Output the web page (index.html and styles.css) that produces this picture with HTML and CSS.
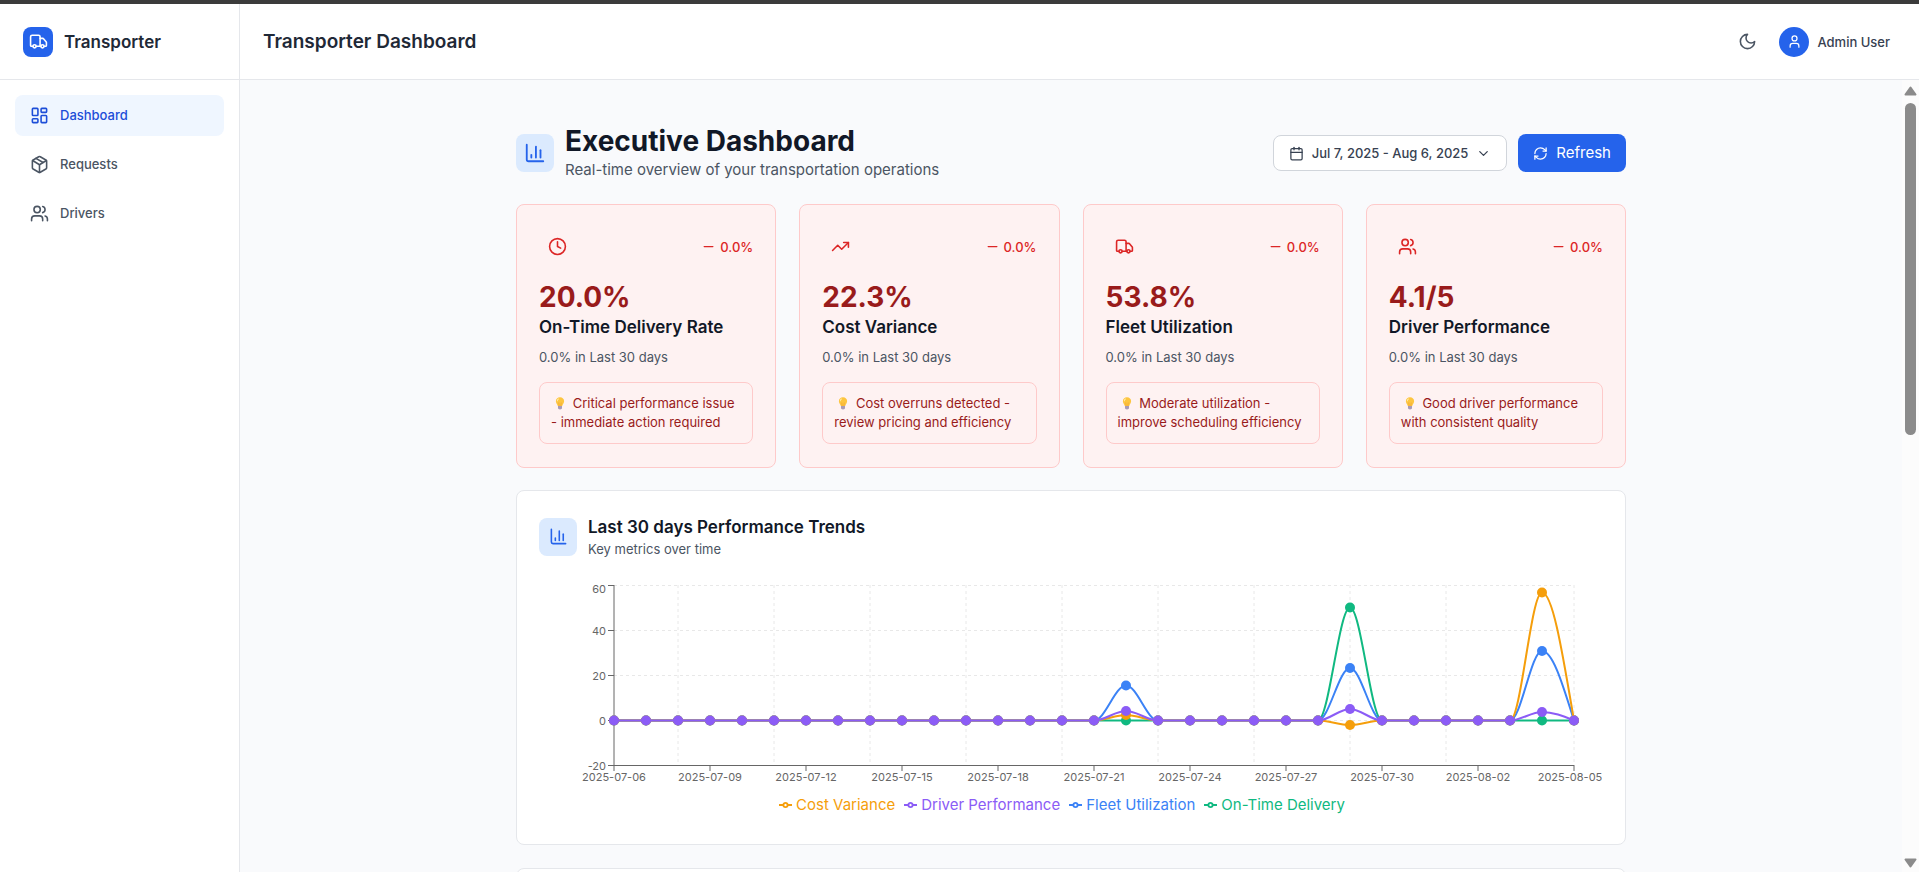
FILE: index.html
```html
<!DOCTYPE html>
<html lang="en">
<head>
<meta charset="utf-8">
<meta name="viewport" content="width=device-width, initial-scale=1">
<title>Transporter Dashboard</title>
<link rel="stylesheet" href="styles.css">
</head>
<body>
<svg class="sprite" aria-hidden="true">
  <symbol id="i-truck" viewBox="0 0 24 24"><path d="M14 18V6a2 2 0 0 0-2-2H4a2 2 0 0 0-2 2v11a1 1 0 0 0 1 1h2"/><path d="M15 18H9"/><path d="M19 18h2a1 1 0 0 0 1-1v-3.65a1 1 0 0 0-.22-.624l-3.48-4.35A1 1 0 0 0 17.52 8H14"/><circle cx="17" cy="18" r="2"/><circle cx="7" cy="18" r="2"/></symbol>
  <symbol id="i-grid" viewBox="0 0 24 24"><rect x="3" y="3" width="7" height="9" rx="1"/><rect x="14" y="3" width="7" height="5" rx="1"/><rect x="14" y="12" width="7" height="9" rx="1"/><rect x="3" y="16" width="7" height="5" rx="1"/></symbol>
  <symbol id="i-package" viewBox="0 0 24 24"><path d="M11 21.73a2 2 0 0 0 2 0l7-4A2 2 0 0 0 21 16V8a2 2 0 0 0-1-1.73l-7-4a2 2 0 0 0-2 0l-7 4A2 2 0 0 0 3 8v8a2 2 0 0 0 1 1.73z"/><path d="M12 22V12"/><path d="m3.3 7 7.703 4.734a2 2 0 0 0 1.994 0L20.7 7"/><path d="m7.5 4.27 9 5.15"/></symbol>
  <symbol id="i-users" viewBox="0 0 24 24"><path d="M16 21v-2a4 4 0 0 0-4-4H6a4 4 0 0 0-4 4v2"/><circle cx="9" cy="7" r="4"/><path d="M22 21v-2a4 4 0 0 0-3-3.87"/><path d="M16 3.13a4 4 0 0 1 0 7.75"/></symbol>
  <symbol id="i-user" viewBox="0 0 24 24"><path d="M19 21v-2a4 4 0 0 0-4-4H9a4 4 0 0 0-4 4v2"/><circle cx="12" cy="7" r="4"/></symbol>
  <symbol id="i-moon" viewBox="0 0 24 24"><path d="M12 3a6 6 0 0 0 9 9 9 9 0 1 1-9-9Z"/></symbol>
  <symbol id="i-chart" viewBox="0 0 24 24"><path d="M3 3v16a2 2 0 0 0 2 2h16"/><path d="M18 17V9"/><path d="M13 17V5"/><path d="M8 17v-3"/></symbol>
  <symbol id="i-calendar" viewBox="0 0 24 24"><path d="M8 2v4"/><path d="M16 2v4"/><rect x="3" y="4" width="18" height="18" rx="2"/><path d="M3 10h18"/></symbol>
  <symbol id="i-chevron" viewBox="0 0 24 24"><path d="m6 9 6 6 6-6"/></symbol>
  <symbol id="i-refresh" viewBox="0 0 24 24"><path d="M3 12a9 9 0 0 1 9-9 9.75 9.75 0 0 1 6.74 2.74L21 8"/><path d="M21 3v5h-5"/><path d="M21 12a9 9 0 0 1-9 9 9.75 9.75 0 0 1-6.74-2.74L3 16"/><path d="M8 16H3v5"/></symbol>
  <symbol id="i-clock" viewBox="0 0 24 24"><circle cx="12" cy="12" r="10"/><path d="M12 6v6l4 2"/></symbol>
  <symbol id="i-trend" viewBox="0 0 24 24"><path d="M16 7h6v6"/><path d="m22 7-8.500 8.500-5-5L2 17"/></symbol>
  <symbol id="i-minus" viewBox="0 0 24 24"><path d="M5 12h14"/></symbol>
  <symbol id="i-bulb" viewBox="0 0 16 16"><path d="M8 1.500c-2.900 0-4.700 2-4.700 4.400 0 2.300 1.700 3.200 2.200 5.600h5c.5-2.400 2.200-3.300 2.200-5.600 0-2.400-1.800-4.400-4.700-4.400z" fill="#fdc53f" stroke="none"/><path d="M6.600 3.200c-1.200.5-1.700 1.500-1.700 2.700" fill="none" stroke="#ffe9a0" stroke-width="1.200"/><path d="M7 11.500 6.600 7.500M9 11.500l.4-4" fill="none" stroke="#f0a030" stroke-width=".7"/><path d="M5.700 11.500h4.600v2.200c0 .8-.8 1.600-2.300 1.600s-2.300-.8-2.300-1.600z" fill="#a99bb5" stroke="none"/></symbol>
  <symbol id="i-series" viewBox="0 0 14 14"><path d="M0 7h4.700a2.300 2.300 0 1 1 4.600 0H14M9.300 7a2.300 2.300 0 1 1-4.600 0"/></symbol>
</svg>

<div class="app">
  <aside class="sidebar">
    <div class="brand">
      <span class="brand-mark"><svg class="icon icon-lg"><use href="#i-truck"/></svg></span>
      <span class="brand-name">Transporter</span>
    </div>
    <nav class="nav">
      <a class="nav-item active" href="#dashboard"><svg class="icon icon-lg"><use href="#i-grid"/></svg>Dashboard</a>
      <a class="nav-item" href="#requests"><svg class="icon icon-lg"><use href="#i-package"/></svg>Requests</a>
      <a class="nav-item" href="#drivers"><svg class="icon icon-lg"><use href="#i-users"/></svg>Drivers</a>
    </nav>
  </aside>

  <div class="content">
    <header class="topbar">
      <div class="topbar-title">Transporter Dashboard</div>
      <div class="topbar-actions">
        <button class="icon-button" type="button" aria-label="Toggle dark mode"><svg class="icon icon-lg"><use href="#i-moon"/></svg></button>
        <button class="user" type="button"><span class="avatar"><svg class="icon icon-sm"><use href="#i-user"/></svg></span>Admin User</button>
      </div>
    </header>

    <div class="viewport">
      <main class="page">
        <div class="page-inner">
          <div class="page-head">
            <div class="heading">
              <span class="badge"><svg class="icon icon-xl"><use href="#i-chart"/></svg></span>
              <div>
                <h1>Executive Dashboard</h1>
                <p class="subtitle">Real-time overview of your transportation operations</p>
              </div>
            </div>
            <div class="actions">
              <button class="date-button" type="button"><svg class="icon icon-sm"><use href="#i-calendar"/></svg>Jul 7, 2025 - Aug 6, 2025<svg class="icon icon-sm"><use href="#i-chevron"/></svg></button>
              <button class="refresh-button" type="button"><svg class="icon icon-sm"><use href="#i-refresh"/></svg>Refresh</button>
            </div>
          </div>

          <section class="kpis">
            <article class="kpi">
              <div class="kpi-top"><span class="kpi-icon"><svg class="icon icon-lg"><use href="#i-clock"/></svg></span><span class="kpi-trend"><svg class="icon icon-sm"><use href="#i-minus"/></svg>0.0%</span></div>
              <div class="kpi-value">20.0%</div>
              <h2>On-Time Delivery Rate</h2>
              <p class="kpi-period">0.0% in Last 30 days</p>
              <p class="kpi-note"><svg class="bulb"><use href="#i-bulb"/></svg> Critical performance issue - immediate action required</p>
            </article>
            <article class="kpi">
              <div class="kpi-top"><span class="kpi-icon"><svg class="icon icon-lg"><use href="#i-trend"/></svg></span><span class="kpi-trend"><svg class="icon icon-sm"><use href="#i-minus"/></svg>0.0%</span></div>
              <div class="kpi-value">22.3%</div>
              <h2>Cost Variance</h2>
              <p class="kpi-period">0.0% in Last 30 days</p>
              <p class="kpi-note"><svg class="bulb"><use href="#i-bulb"/></svg> Cost overruns detected - review pricing and efficiency</p>
            </article>
            <article class="kpi">
              <div class="kpi-top"><span class="kpi-icon"><svg class="icon icon-lg"><use href="#i-truck"/></svg></span><span class="kpi-trend"><svg class="icon icon-sm"><use href="#i-minus"/></svg>0.0%</span></div>
              <div class="kpi-value">53.8%</div>
              <h2>Fleet Utilization</h2>
              <p class="kpi-period">0.0% in Last 30 days</p>
              <p class="kpi-note"><svg class="bulb"><use href="#i-bulb"/></svg> Moderate utilization - improve scheduling efficiency</p>
            </article>
            <article class="kpi">
              <div class="kpi-top"><span class="kpi-icon"><svg class="icon icon-lg"><use href="#i-users"/></svg></span><span class="kpi-trend"><svg class="icon icon-sm"><use href="#i-minus"/></svg>0.0%</span></div>
              <div class="kpi-value">4.1/5</div>
              <h2>Driver Performance</h2>
              <p class="kpi-period">0.0% in Last 30 days</p>
              <p class="kpi-note"><svg class="bulb"><use href="#i-bulb"/></svg> Good driver performance with consistent quality</p>
            </article>
          </section>

          <section class="panel">
            <div class="heading">
              <span class="badge"><svg class="icon icon-lg"><use href="#i-chart"/></svg></span>
              <div>
                <h2>Last 30 days Performance Trends</h2>
                <p class="panel-sub">Key metrics over time</p>
              </div>
            </div>
            <svg class="chart" viewBox="0 0 1064 208" role="img" aria-label="Performance trends from 2025-07-06 to 2025-08-05">
              <defs>
                <marker id="dot-green" markerUnits="userSpaceOnUse" markerWidth="12" markerHeight="12" refX="6" refY="6"><circle cx="6" cy="6" r="5" fill="#10b981"/></marker>
                <marker id="dot-blue" markerUnits="userSpaceOnUse" markerWidth="12" markerHeight="12" refX="6" refY="6"><circle cx="6" cy="6" r="5" fill="#3b82f6"/></marker>
                <marker id="dot-amber" markerUnits="userSpaceOnUse" markerWidth="12" markerHeight="12" refX="6" refY="6"><circle cx="6" cy="6" r="5" fill="#f59e0b"/></marker>
                <marker id="dot-violet" markerUnits="userSpaceOnUse" markerWidth="12" markerHeight="12" refX="6" refY="6"><circle cx="6" cy="6" r="5" fill="#8b5cf6"/></marker>
              </defs>
              <path class="gridlines" d="M75 5.500H1035M75 50.500H1035M75 95.500H1035M75 140.500H1035M139 5V185M235 5V185M331 5V185M427 5V185M523 5V185M619 5V185M715 5V185M811 5V185M907 5V185M1035 5V185"/>
              <path class="axis" d="M75 5V185.500H1035M69 5.500H75M69 50.500H75M69 95.500H75M69 140.500H75M69 185.500H75M75 185v6M171 185v6M267 185v6M363 185v6M459 185v6M555 185v6M651 185v6M747 185v6M843 185v6M939 185v6M1035 185v6"/>
              <g class="ticks ticks-y">
                <text x="67" y="13">60</text><text x="67" y="55">40</text><text x="67" y="100">20</text><text x="67" y="145">0</text><text x="67" y="190">-20</text>
              </g>
              <g class="ticks ticks-x">
                <text x="75" y="201">2025-07-06</text><text x="171" y="201">2025-07-09</text><text x="267" y="201">2025-07-12</text><text x="363" y="201">2025-07-15</text><text x="459" y="201">2025-07-18</text><text x="555" y="201">2025-07-21</text><text x="651" y="201">2025-07-24</text><text x="747" y="201">2025-07-27</text><text x="843" y="201">2025-07-30</text><text x="939" y="201">2025-08-02</text><text x="1031" y="201">2025-08-05</text>
              </g>
              <path class="series green" d="M75 140.500h32h32h32h32h32h32h32h32h32h32h32h32h32h32h32h32h32h32h32h32h32h32C790 140.500 800 27.500 811 27.500C822 27.500 832 140.500 843 140.500h32h32h32h32h32h32"/>
              <path class="series blue" d="M75 140.500h32h32h32h32h32h32h32h32h32h32h32h32h32h32h32C566 140.500 576 105.500 587 105.500C598 105.500 608 140.500 619 140.500h32h32h32h32h32C790 140.500 800 88 811 88C822 88 832 140.500 843 140.500h32h32h32h32C982 140.500 992 71 1003 71C1014 71 1024 105.500 1035 140.500"/>
              <path class="series amber" d="M75 140.500h32h32h32h32h32h32h32h32h32h32h32h32h32h32h32C566 140.500 576 135 587 135C598 135 608 140.500 619 140.500h32h32h32h32h32C790 140.500 800 145 811 145C822 145 832 140.500 843 140.500h32h32h32h32C982 140.500 992 12.500 1003 12.500C1014 12.500 1024 76 1035 140.500"/>
              <path class="series violet" d="M75 140.500h32h32h32h32h32h32h32h32h32h32h32h32h32h32h32C566 140.500 576 131 587 131C598 131 608 140.500 619 140.500h32h32h32h32h32C790 140.500 800 129 811 129C822 129 832 140.500 843 140.500h32h32h32h32C982 140.500 992 132 1003 132C1014 132 1024 136 1035 140.500"/>
            </svg>
            <ul class="legend">
              <li class="amber"><svg class="legend-icon"><use href="#i-series"/></svg>Cost Variance</li>
              <li class="violet"><svg class="legend-icon"><use href="#i-series"/></svg>Driver Performance</li>
              <li class="blue"><svg class="legend-icon"><use href="#i-series"/></svg>Fleet Utilization</li>
              <li class="green"><svg class="legend-icon"><use href="#i-series"/></svg>On-Time Delivery</li>
            </ul>
          </section>

          <section class="panel panel-next"></section>
        </div>
      </main>
      <div class="scrollbar" aria-hidden="true">
        <svg class="arrow" viewBox="0 0 13 10"><path d="M6.500 1.500 11.500 8.500H1.500z"/></svg>
        <span class="track"><span class="thumb"></span></span>
        <svg class="arrow" viewBox="0 0 13 10"><path d="M6.500 8.500 1.500 1.500h10z"/></svg>
      </div>
    </div>
  </div>
</div>
</body>
</html>
```

FILE: styles.css
```css
* { box-sizing: border-box; }

body {
  margin: 0;
  height: 100vh;
  overflow: hidden;
  border-top: 4px solid #3b3b3b;
  background: #f9fafc;
  color: #111827;
  font: 400 15px/22px Inter, "Liberation Sans", sans-serif;
}

h1, h2, p, ul { margin: 0; padding: 0; }
button { font: inherit; cursor: pointer; }

.sprite { position: absolute; width: 0; height: 0; }

.icon {
  flex: none;
  fill: none;
  stroke: currentColor;
  stroke-width: 2;
  stroke-linecap: round;
  stroke-linejoin: round;
}
.icon-sm { width: 15px; height: 15px; }
.icon-lg { width: 19px; height: 19px; }
.icon-xl { width: 22px; height: 22px; }

.app { display: flex; height: 100%; }

.sidebar {
  flex: none;
  width: 240px;
  background: #fff;
  border-right: 1px solid #e5e7eb;
}
.brand {
  display: flex;
  align-items: center;
  gap: 11px;
  height: 76px;
  padding: 0 23px;
  border-bottom: 1px solid #e5e7eb;
}
.brand-mark {
  display: grid;
  place-items: center;
  width: 30px;
  height: 30px;
  border-radius: 8px;
  background: #2563eb;
  color: #fff;
}
.brand-name { font-size: 17px; font-weight: 600; color: #1f2937; }

.nav { display: flex; flex-direction: column; gap: 8px; padding: 15px; }
.nav-item {
  display: flex;
  align-items: center;
  gap: 11px;
  padding: 11px 15px;
  border-radius: 8px;
  color: #4b5563;
  font-size: 13px;
  font-weight: 500;
  line-height: 19px;
  text-decoration: none;
}
.nav-item.active { background: #eff6ff; color: #1d4ed8; }

.content { display: flex; flex: 1; flex-direction: column; min-width: 0; }

.topbar {
  display: flex;
  flex: none;
  align-items: center;
  justify-content: space-between;
  height: 76px;
  padding: 0 29px 0 23px;
  background: #fff;
  border-bottom: 1px solid #e5e7eb;
}
.topbar-title { font-size: 19px; font-weight: 600; line-height: 24px; color: #1f2937; }
.topbar-actions { display: flex; align-items: center; gap: 14px; }
.icon-button, .user {
  display: flex;
  align-items: center;
  gap: 8px;
  padding: 0;
  border: 0;
  background: none;
  color: #374151;
}
.icon-button { padding: 8px; color: #4b5563; }
.user { font-size: 13px; font-weight: 500; }
.avatar {
  display: grid;
  place-items: center;
  width: 30px;
  height: 30px;
  border-radius: 50%;
  background: #2563eb;
  color: #fff;
}

.viewport { display: flex; flex: 1; min-height: 0; }
.page { flex: 1; min-width: 0; overflow: hidden; padding: 44px 23px 0; }
.page-inner { max-width: 1110px; margin: 0 auto; }

.page-head { display: flex; align-items: center; justify-content: space-between; margin-bottom: 22px; }
.heading { display: flex; align-items: center; gap: 11px; }
.badge {
  display: grid;
  flex: none;
  place-items: center;
  width: 38px;
  height: 38px;
  border-radius: 8px;
  background: #dbeafe;
  color: #2563eb;
}
h1 { font-size: 28px; font-weight: 700; line-height: 34px; }
.subtitle { color: #4b5563; line-height: 24px; }

.actions { display: flex; align-items: center; gap: 11px; }
.date-button, .refresh-button { display: flex; align-items: center; gap: 8px; border-radius: 8px; }
.date-button {
  height: 36px;
  padding: 0 15px;
  border: 1px solid #d1d5db;
  background: #fff;
  color: #374151;
  font-size: 13px;
  font-weight: 500;
}
.refresh-button {
  height: 38px;
  padding: 0 15px;
  border: 0;
  background: #2563eb;
  color: #fff;
}

.kpis { display: grid; grid-template-columns: repeat(4, 1fr); gap: 23px; margin-bottom: 22px; }
.kpi {
  padding: 23px 22px;
  border: 1px solid #fecaca;
  border-radius: 8px;
  background: #fef2f2;
}
.kpi-top { display: flex; align-items: center; justify-content: space-between; margin-bottom: 15px; color: #dc2626; }
.kpi-icon { display: flex; padding: 9px; }
.kpi-trend { display: flex; align-items: center; gap: 4px; font-size: 13px; font-weight: 500; }
.kpi-value { color: #991b1b; font-size: 28px; font-weight: 700; line-height: 34px; }
h2 { font-size: 17px; font-weight: 600; line-height: 26px; }
.kpi-period { margin-top: 8px; color: #4b5563; font-size: 13px; line-height: 19px; }
.kpi-note {
  margin-top: 15px;
  padding: 11px;
  border: 1px solid #fecaca;
  border-radius: 8px;
  color: #991b1b;
  font-size: 13px;
  line-height: 19px;
}
.bulb { width: 18px; height: 14px; vertical-align: -2px; }

.panel {
  margin-bottom: 23px;
  padding: 23px 22px;
  border: 1px solid #e5e7eb;
  border-radius: 8px;
  background: #fff;
}
.panel-sub { color: #4b5563; font-size: 13px; line-height: 19px; }
.panel-next { min-height: 260px; }

.chart { display: block; width: 100%; height: auto; margin-top: 21px; overflow: visible; }
.gridlines { fill: none; stroke: #e8e8e8; stroke-dasharray: 3 3; }
.axis { fill: none; stroke: #666; }
.ticks { fill: #666; font-size: 11px; }
.ticks-y { text-anchor: end; }
.ticks-x { text-anchor: middle; }

.green { color: #10b981; }
.blue { color: #3b82f6; }
.amber { color: #f59e0b; }
.violet { color: #8b5cf6; }
.series { fill: none; stroke: currentColor; stroke-width: 2; }
.series.green { marker: url(#dot-green); }
.series.blue { marker: url(#dot-blue); }
.series.amber { marker: url(#dot-amber); }
.series.violet { marker: url(#dot-violet); }

.legend { display: flex; justify-content: center; gap: 9px; margin-top: 6px; padding: 0 18px 5px 0; list-style: none; }
.legend li { display: flex; align-items: center; gap: 4px; }
.legend-icon { width: 13px; height: 14px; fill: none; stroke: currentColor; stroke-width: 2; }

.scrollbar {
  display: flex;
  flex: none;
  flex-direction: column;
  align-items: center;
  width: 17px;
  padding: 6px 0 4px;
  background: #fcfcfc;
}
.arrow { width: 13px; height: 10px; fill: #8b8b8b; stroke: #8b8b8b; stroke-width: 2; stroke-linejoin: round; }
.track { flex: 1; width: 11px; padding: 7px 0; }
.thumb { display: block; height: 44.4%; border-radius: 6px; background: #8b8b8b; }
```
